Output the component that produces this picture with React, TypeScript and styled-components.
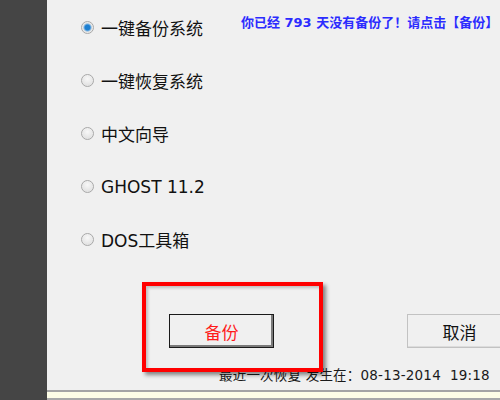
import * as React from 'react';
import styled, { createGlobalStyle } from 'styled-components';

const GlobalStyle = createGlobalStyle`
	html, body {
		margin: 0;
		padding: 0;
		background: #f0f0f0;
	}
	body {
		font-family: Tahoma, "DejaVu Sans", "Noto Sans CJK SC", sans-serif;
	}
`;

const Window = styled.div`
	width: 500px;
	height: 400px;
	display: flex;
	overflow: hidden;
	background: #f0f0f0;
`;

const Sidebar = styled.div`
	width: 47px;
	flex: none;
	background: #454545;
`;

const Main = styled.div`
	flex: 1;
	display: flex;
	flex-direction: column;
	min-width: 0;
`;

const Content = styled.div`
	position: relative;
	height: 390px;
	display: flex;
	flex-direction: column;
`;

const TopRow = styled.div`
	display: flex;
	align-items: flex-start;
`;

const RadioList = styled.div`
	width: 160px;
	flex: none;
	padding: 1px 0 0 34px;
	display: flex;
	flex-direction: column;
`;

const RadioRow = styled.label`
	height: 53px;
	display: flex;
	align-items: center;
	gap: 7px;
	font-family: "DejaVu Sans", "Noto Sans CJK SC", sans-serif;
	font-size: 17px;
	color: #111;
	white-space: nowrap;
`;

const RadioDot = styled.span<{ $checked?: boolean }>`
	width: 11px;
	height: 11px;
	flex: none;
	border-radius: 50%;
	border: 1px solid #a8a8a8;
	background: ${p => p.$checked
		? 'radial-gradient(circle, #1e7fd0 0 2.5px, #7fb6e4 3.5px, #e2e2e2 4.5px, #fafafa 100%)'
		: 'radial-gradient(circle at 50% 35%, #f8f8f8 0, #e6e6e6 60%, #d4d4d4 100%)'};
	box-shadow: inset 0 0 1px #fff;
`;

const Notice = styled.div`
	flex: none;
	padding-top: 14px;
	font-family: "DejaVu Sans", "Noto Sans CJK SC", sans-serif;
	font-size: 13px;
	font-weight: bold;
	line-height: 18px;
	color: #2b2bff;
	white-space: nowrap;
`;

const ButtonRow = styled.div`
	display: flex;
	margin-top: 48px;
	padding-left: 122px;
	gap: 133px;
`;

const Button = styled.button<{ $primary?: boolean }>`
	width: 105px;
	height: 34px;
	flex: none;
	margin: 0;
	padding: 0;
	font-family: "DejaVu Sans", "Noto Sans CJK SC", sans-serif;
	font-size: 17px;
	color: ${p => (p.$primary ? '#ff1a1a' : '#111')};
	background: #f0f0f0;
	border: 1px solid ${p => (p.$primary ? '#1a1a1a' : '#c2c2c2')};
	box-shadow: ${p => (p.$primary ? 'inset -2px -2px 0 #7a7a7a' : 'inset -1px -1px 0 #dcdcdc')};
`;

const Status = styled.div`
	margin-top: 19px;
	padding-left: 172px;
	font-family: "DejaVu Sans", "Noto Sans CJK SC", sans-serif;
	font-size: 13.5px;
	line-height: 16px;
	letter-spacing: 0.2px;
	color: #1a1a1a;
	white-space: nowrap;
`;

const Highlight = styled.div`
	position: absolute;
	left: 95px;
	top: 282px;
	width: 173px;
	height: 82px;
	border: 4px solid #ff0000;
	box-shadow: 3px 3px 4px rgba(0, 0, 0, 0.45), inset 2px 2px 3px rgba(0, 0, 0, 0.2);
	pointer-events: none;
`;

const Strip = styled.div`
	height: 10px;
	flex: none;
	border-top: 2px solid #a4a4a4;
	border-bottom: 2px solid #a8a8a8;
	background: #fdfde6;
	box-sizing: border-box;
`;

const options = ['一键备份系统', '一键恢复系统', '中文向导', 'GHOST 11.2', 'DOS工具箱'];

export default function App() {
	return (
		<>
			<GlobalStyle />
			<Window>
				<Sidebar />
				<Main>
					<Content>
						<TopRow>
							<RadioList>
								{options.map((label, i) => (
									<RadioRow key={label}>
										<RadioDot $checked={i === 0} />
										{label}
									</RadioRow>
								))}
							</RadioList>
							<Notice>你已经 793 天没有备份了！请点击【备份】</Notice>
						</TopRow>
						<ButtonRow>
							<Button $primary>备份</Button>
							<Button>取消</Button>
						</ButtonRow>
						<Status>最近一次恢复 发生在：08-13-2014&nbsp;&nbsp;19:18</Status>
						<Highlight />
					</Content>
					<Strip />
				</Main>
			</Window>
		</>
	);
}
